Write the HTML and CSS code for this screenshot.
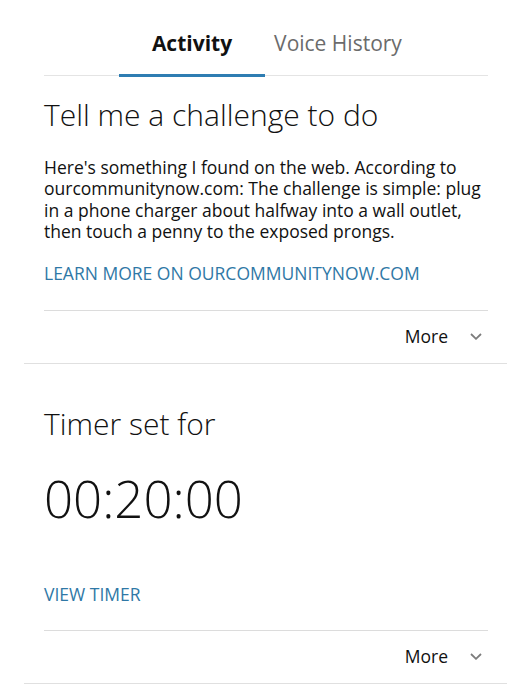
FILE: index.html
```html
<!DOCTYPE html>
<html>
<head>
  <title>Activity</title>
  <link rel="stylesheet" href="styles.css">
</head>
<body>
  <div class="tab-bar">
    <div class="tabs">
      <div class="tab active">Activity</div>
      <div class="tab">Voice History</div>
    </div>
  </div>

  <div class="card">
    <h2 class="card-title">Tell me a challenge to do</h2>
    <p class="card-text">Here's something I found on the web. According to ourcommunitynow.com: The challenge is simple: plug in a phone charger about halfway into a wall outlet, then touch a penny to the exposed prongs.</p>
    <a class="card-link" href="#">LEARN MORE ON OURCOMMUNITYNOW.COM</a>
    <div class="more-row">
      <span>More</span>
      <svg class="chevron" width="12" height="7" viewBox="0 0 12 7"><path d="M1 1 L6 5.8 L11 1" fill="none" stroke="#7c7c7c" stroke-width="1.8"/></svg>
    </div>
  </div>

  <div class="card timer-card">
    <h2 class="card-title">Timer set for</h2>
    <div class="timer">00:20:00</div>
    <a class="card-link timer-link" href="#">VIEW TIMER</a>
    <div class="more-row">
      <span>More</span>
      <svg class="chevron" width="12" height="7" viewBox="0 0 12 7"><path d="M1 1 L6 5.8 L11 1" fill="none" stroke="#7c7c7c" stroke-width="1.8"/></svg>
    </div>
  </div>
</body>
</html>
```
FILE: styles.css
```css
body {
  margin: 0;
  font-family: "Open Sans", "Noto Sans", sans-serif;
  color: #111;
  background: #fff;
}

/* tabs */
.tab-bar {
  margin: 0 31px 0 44px;
  border-bottom: 1px solid #e4e4e4;
}

.tabs {
  display: flex;
  margin-left: 75px;
  margin-bottom: -2px;
}

.tab {
  width: 146px;
  padding: 31px 0 19px;
  font-size: 21px;
  line-height: 24px;
  text-align: center;
  color: #6b6b6b;
  border-bottom: 3px solid transparent;
}

.tab.active {
  color: #111;
  font-weight: bold;
  border-bottom-color: #2e7db2;
}

/* cards */
.card {
  margin: 0 12px 0 24px;
  padding: 21px 19px 0 20px;
  border-bottom: 1px solid #e0e0e0;
}

.timer-card {
  padding-top: 42px;
}

.card-title {
  margin: 0;
  font-size: 30px;
  font-weight: 300;
  line-height: 36px;
}

.card-text {
  margin: 24px 0 0;
  font-size: 17.5px;
  line-height: 21.3px;
}

.card-link {
  display: block;
  margin-top: 20px;
  font-size: 17.5px;
  line-height: 22px;
  color: #2f78a6;
  text-decoration: none;
}

.timer {
  margin-top: 26px;
  font-size: 51px;
  font-weight: 300;
  line-height: 60px;
}

.timer-link {
  margin-top: 55px;
}

.more-row {
  display: flex;
  justify-content: flex-end;
  align-items: center;
  gap: 22px;
  margin-top: 26px;
  padding: 14px 6px 16px 0;
  border-top: 1px solid #dcdcdc;
  font-size: 17.5px;
  line-height: 22px;
}

.timer-card .more-row {
  margin-top: 25px;
}
```
